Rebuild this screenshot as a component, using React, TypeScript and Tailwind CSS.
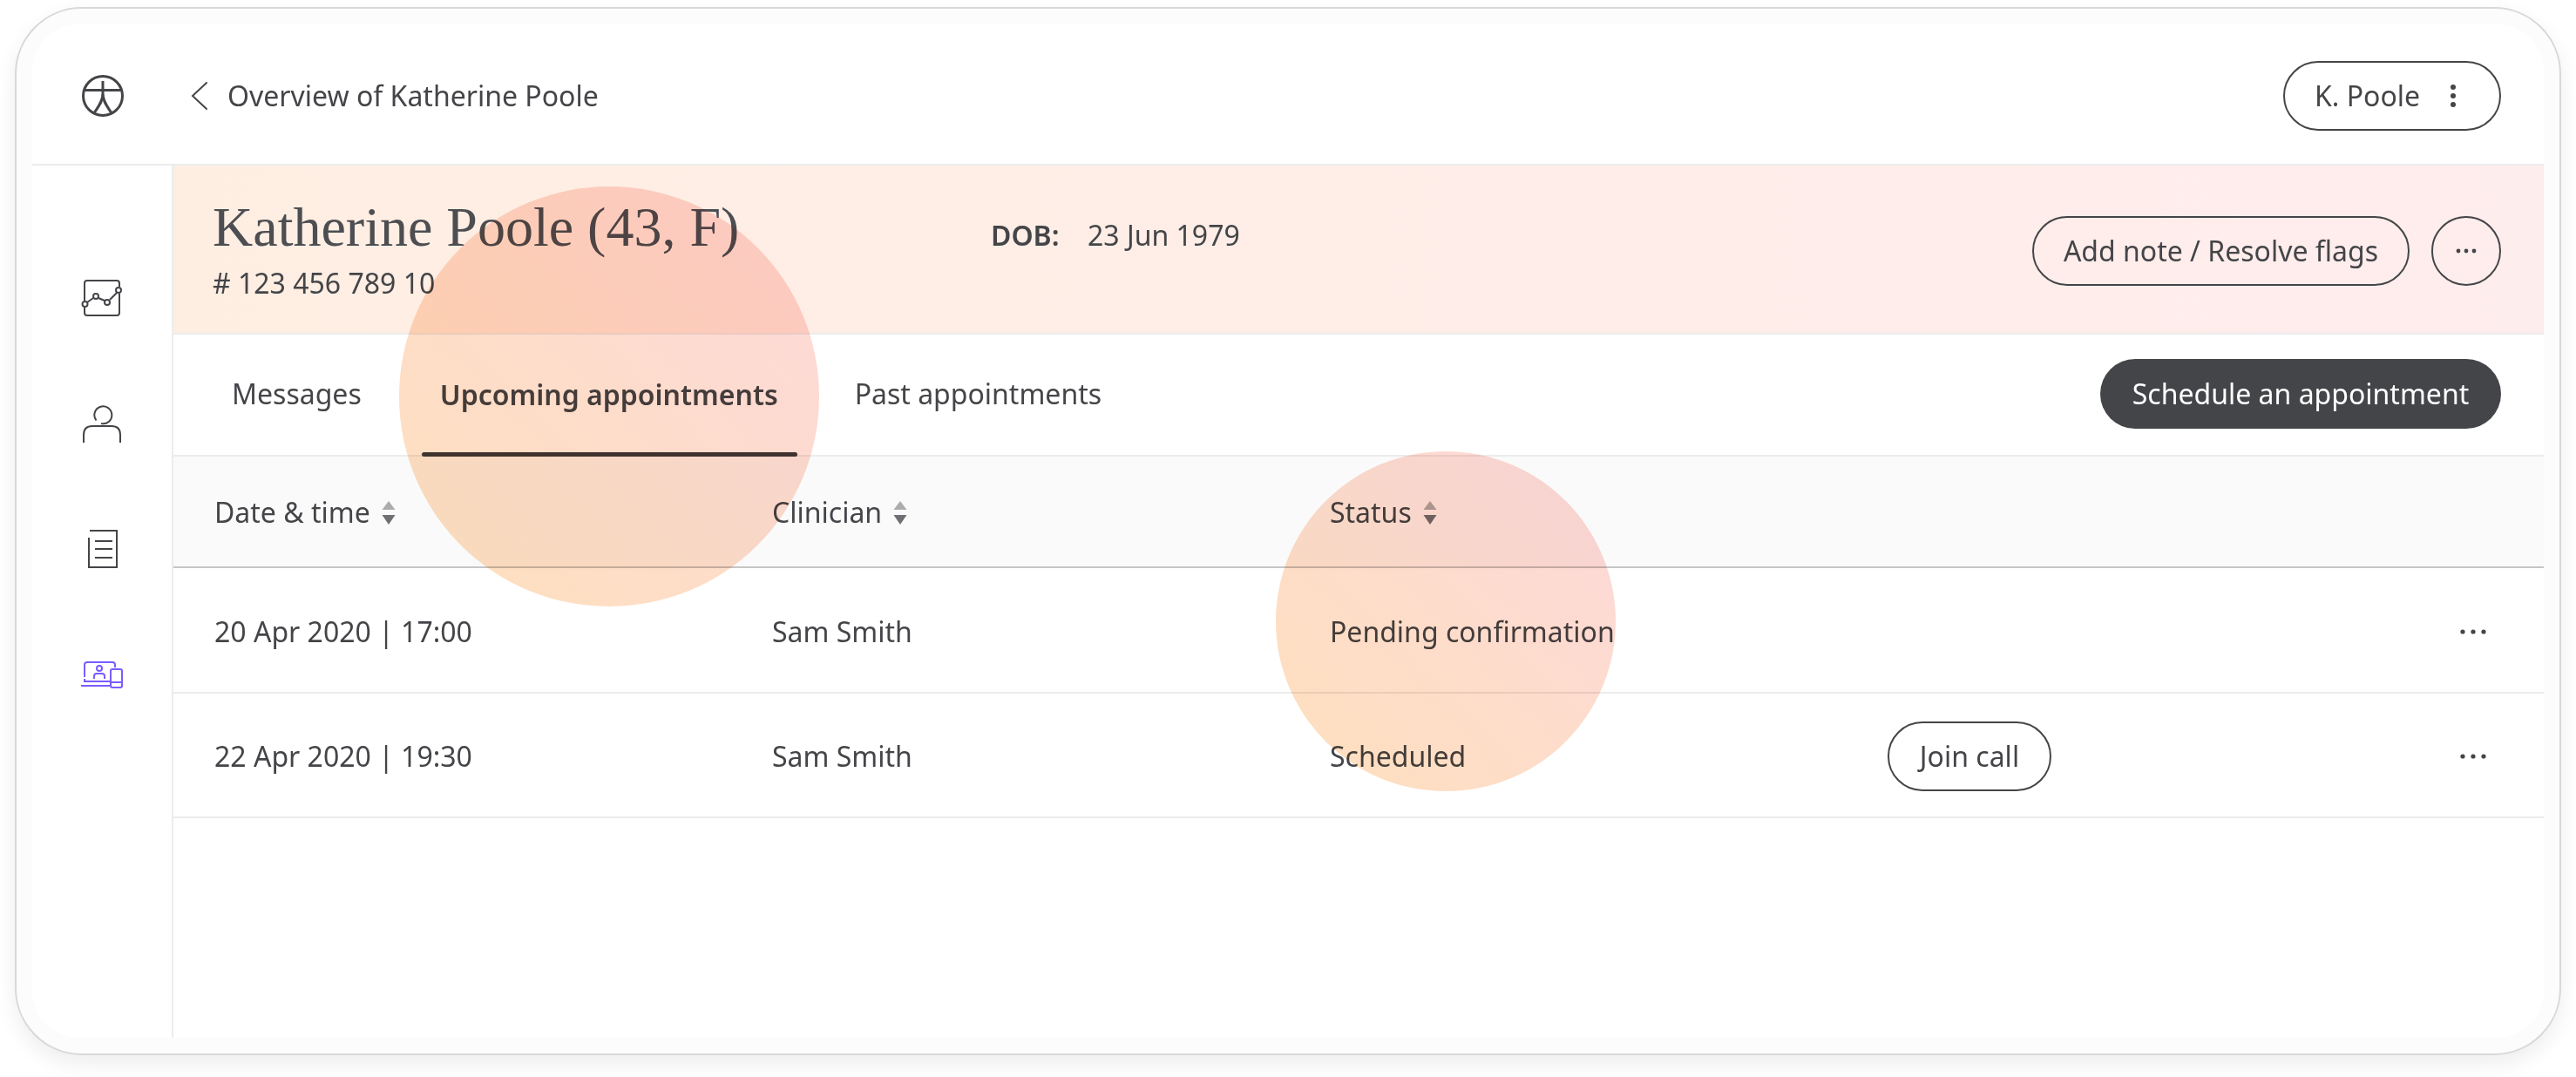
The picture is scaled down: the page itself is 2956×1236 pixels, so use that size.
import React from "react";

const sans = { fontFamily: '"Noto Sans", sans-serif' };

function Logo() {
  return (
    <svg width="52" height="52" viewBox="0 0 52 52" fill="none" stroke="#444548" strokeWidth="3">
      <circle cx="26" cy="26" r="22.5" />
      <path d="M4 19.5H48" />
      <path d="M26 9V24C26 32 21 38 16.5 45" />
      <path d="M26 24C26 32 31 38 35.5 45" />
    </svg>
  );
}

function Chevron() {
  return (
    <svg width="20" height="34" viewBox="0 0 20 34" fill="none" stroke="#444548" strokeWidth="2" strokeLinecap="round">
      <path d="M18 2L2 17L18 32" />
    </svg>
  );
}

function HDots() {
  return (
    <svg width="30" height="6" viewBox="0 0 30 6" fill="#444548">
      <circle cx="3" cy="3" r="2.6" />
      <circle cx="15" cy="3" r="2.6" />
      <circle cx="27" cy="3" r="2.6" />
    </svg>
  );
}

function SmallDots() {
  return (
    <svg width="24" height="6" viewBox="0 0 24 6" fill="#444548">
      <circle cx="3" cy="3" r="2.4" />
      <circle cx="12" cy="3" r="2.4" />
      <circle cx="21" cy="3" r="2.4" />
    </svg>
  );
}

function VDots() {
  return (
    <svg width="8" height="28" viewBox="0 0 8 28" fill="#444548">
      <circle cx="4" cy="4" r="3" />
      <circle cx="4" cy="14" r="3" />
      <circle cx="4" cy="24" r="3" />
    </svg>
  );
}

function Sort() {
  return (
    <svg width="16" height="27" viewBox="0 0 16 27" className="ml-[13px]">
      <path d="M8 0L15.5 10H0.5Z" fill="#acacae" />
      <path d="M8 27L15.5 16H0.5Z" fill="#6f7074" />
    </svg>
  );
}

function ChartIcon() {
  return (
    <svg width="48" height="44" viewBox="0 0 48 44" fill="none" stroke="#444548" strokeWidth="2">
      <path d="M4 25V5Q4 2 7 2H41Q44 2 44 5V9" />
      <path d="M44 17V39Q44 42 41 42H7Q4 42 4 39V33" />
      <path d="M7 27L14 22M20 22L27 25M33 24L41 16" />
      <circle cx="4.500" cy="29" r="3" fill="white" />
      <circle cx="17" cy="20" r="3" fill="white" />
      <circle cx="30" cy="27" r="3" fill="white" />
      <circle cx="43" cy="13" r="3" fill="white" />
    </svg>
  );
}

function PersonIcon() {
  return (
    <svg width="46" height="44" viewBox="0 0 46 44" fill="none" stroke="#444548" strokeWidth="2">
      <path d="M16.500 17.500A10 10 0 1 1 22 21" />
      <path d="M2 43V34Q2 24 12 24H34Q44 24 44 34V43" />
    </svg>
  );
}

function DocIcon() {
  return (
    <svg width="36" height="46" viewBox="0 0 36 46" fill="none" stroke="#444548" strokeWidth="2">
      <path d="M4 2H35V44H3V10" />
      <path d="M10 14H30M10 23H30M10 33H30" />
    </svg>
  );
}

function DevicesIcon() {
  return (
    <svg width="50" height="34" viewBox="0 0 50 34" fill="none" stroke="#7a5cff" strokeWidth="2">
      <path d="M5 19V5Q5 2 8 2H37Q40 2 40 5V8" />
      <path d="M5 21V24H35" />
      <path d="M1 29H35" />
      <circle cx="22" cy="9" r="3" />
      <path d="M16 21V18Q16 15 19 15H25Q28 15 28 18V21" />
      <rect x="35" y="10" width="13" height="21" rx="2" />
      <path d="M35 25H48" />
    </svg>
  );
}

function Row({ date, status, join, h }: { date: string; status: string; join?: boolean; h: string }) {
  return (
    <div className={`grid grid-cols-[640px_640px_640px_1fr] items-center pl-[47px] pt-[3px] border-b-2 border-[#ececec] ${h}`}>
      <span>{date}</span>
      <span>Sam Smith</span>
      <span>{status}</span>
      <div className="flex items-center justify-between pr-[66px]">
        {join ? (
          <button className="h-[80px] w-[188px] rounded-full border-2 border-[#444548] text-[32px]">Join call</button>
        ) : (
          <span />
        )}
        <HDots />
      </div>
    </div>
  );
}

export default function App() {
  return (
    <div className="relative w-[2956px] h-[1236px] bg-white overflow-hidden pl-[17px] pt-[8px] text-[32px] text-[#444548]" style={sans}>
      <div className="w-[2922px] h-[1203px] rounded-[77px] border-2 border-[#d8d8d8] bg-[#fcfcfc] p-[18px] shadow-[0_10px_24px_rgba(0,0,0,0.07)]">
        <div className="w-full h-full rounded-[54px] bg-white flex flex-col">
          <header className="h-[162px] shrink-0 border-b-2 border-[#ececec] flex items-center pt-[4px] pl-[55px] pr-[49px]">
            <Logo />
            <div className="ml-[75px] flex items-center">
              <Chevron />
              <span className="ml-[22px]">Overview of Katherine Poole</span>
            </div>
            <button className="ml-auto mt-[-1px] h-[80px] w-[250px] rounded-full border-2 border-[#444548] flex items-center pl-[34px]">
              <span>K. Poole</span>
              <span className="ml-[34px] flex"><VDots /></span>
            </button>
          </header>
          <div className="flex flex-1 min-h-0">
            <aside className="w-[162px] shrink-0 border-r-2 border-[#ececec] flex flex-col items-center pt-[130px]">
              <div className="h-[44px] flex items-center"><ChartIcon /></div>
              <div className="h-[44px] mt-[101px] flex items-center"><PersonIcon /></div>
              <div className="h-[46px] mt-[98px] flex items-center"><DocIcon /></div>
              <div className="h-[34px] mt-[105px] flex items-center"><DevicesIcon /></div>
            </aside>
            <main className="flex-1 min-w-0">
              <section className="h-[194px] border-b-2 border-[#ececec] bg-gradient-to-r from-[#feeee2] to-[#feeded] flex pl-[45px] pr-[49px]">
                <div className="w-[893px] pt-[27px]">
                  <h1 className="text-[64px] leading-[88px] text-[#4d4e52] font-normal" style={{ fontFamily: '"Liberation Serif", serif' }}>
                    Katherine Poole (43, F)
                  </h1>
                  <p className="mt-[-2px] leading-[44px]">#&nbsp;123 456 789 10</p>
                </div>
                <div className="pt-[58px] leading-[44px] flex">
                  <b className="font-semibold w-[111px]">DOB:</b>
                  <span>23 Jun 1979</span>
                </div>
                <div className="ml-auto flex items-center gap-[25px] pt-[3px]">
                  <button className="h-[80px] w-[433px] rounded-full border-2 border-[#444548]">Add note / Resolve flags</button>
                  <button className="h-[80px] w-[80px] rounded-full border-2 border-[#444548] flex items-center justify-center"><SmallDots /></button>
                </div>
              </section>
              <nav className="h-[140px] border-b-2 border-[#ececec] flex items-center pl-[67px] pr-[49px]">
                <span className="mt-[-2px]">Messages</span>
                <span className="relative ml-[90px] font-semibold h-full flex items-center">
                  Upcoming appointments
                  <span className="absolute left-[-21px] right-[-22px] bottom-[-2px] h-[5px] rounded-full bg-[#403a3a]" />
                </span>
                <span className="ml-[88px] mt-[-2px]">Past appointments</span>
                <button className="ml-auto mt-[-2px] h-[80px] w-[460px] rounded-full bg-[#444548] text-white">Schedule an appointment</button>
              </nav>
              <div className="h-[128px] pt-[2px] bg-[#fafafa] border-b-2 border-[#c6c6c6] grid grid-cols-[640px_640px_1fr] items-center pl-[47px]">
                <span className="flex items-center">Date &amp; time<Sort /></span>
                <span className="flex items-center">Clinician<Sort /></span>
                <span className="flex items-center">Status<Sort /></span>
              </div>
              <Row h="h-[144px]" date="20 Apr 2020 | 17:00" status="Pending confirmation" />
              <Row h="h-[143px]" date="22 Apr 2020 | 19:30" status="Scheduled" join />
            </main>
          </div>
        </div>
      </div>
      <div className="absolute left-[458px] top-[214px] w-[482px] h-[482px] rounded-full bg-gradient-to-tr from-[#fee0bc] to-[#fdd8da] mix-blend-multiply pointer-events-none" />
      <div className="absolute left-[1464px] top-[518px] w-[390px] h-[390px] rounded-full bg-gradient-to-tr from-[#fee0bc] to-[#fdd8da] mix-blend-multiply pointer-events-none" />
    </div>
  );
}
